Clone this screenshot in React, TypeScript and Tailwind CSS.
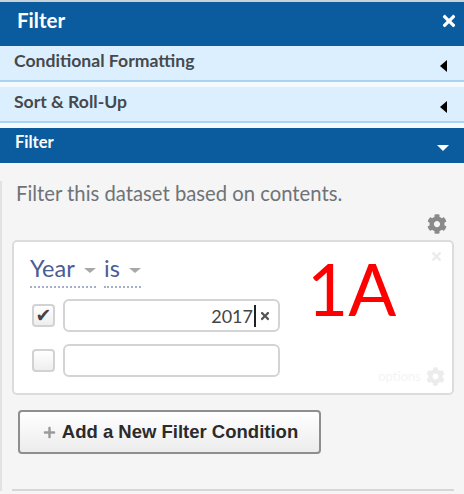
import { FaCog, FaPlus, FaTimes } from "react-icons/fa";

function SectionRow({ label }: { label: string }) {
  return (
    <div className="flex h-[36px] items-start justify-between border-b-2 border-[#a9d3f5] bg-[#dcefff] pl-[14px] pr-[17px]">
      <span className="mt-[4px] text-[17.6px] leading-[22px] font-bold text-[#45494d]">{label}</span>
      <span className="mt-[14px] h-0 w-0 border-y-[6px] border-r-[7px] border-y-transparent border-r-black" />
    </div>
  );
}

function Caret() {
  return <span className="mt-[3px] h-0 w-0 border-x-[6px] border-t-[5px] border-x-transparent border-t-[#a8a8a8]" />;
}

function Condition({ checked }: { checked?: boolean }) {
  return (
    <div className="flex items-center gap-[8px]">
      <span className="flex h-[23px] w-[23px] items-center justify-center rounded-[4px] border-2 border-[#d2d2d2] bg-gradient-to-b from-white to-[#eeeeee] font-['DejaVu_Sans',sans-serif] text-[19px] leading-none text-[#444]">
        {checked && "✔"}
      </span>
      <div className="flex h-[33px] w-[217px] items-center justify-end rounded-[6px] border-2 border-[#d4d4d4] bg-white pr-[7px] text-[18px] text-[#444]">
        {checked && (
          <>
            <span className="border-r-2 border-[#222] pr-[1px] leading-[22px]">2017</span>
            <FaTimes className="ml-[3px] text-[12px] text-[#555]" />
          </>
        )}
      </div>
    </div>
  );
}

export default function App() {
  return (
    <div className="h-[494px] w-[464px] overflow-hidden bg-[#f5f5f5] font-['Lato',sans-serif]">
      <div className="flex h-[46px] items-start justify-between border-t-2 border-[#c8d0d8] bg-[#0b5c9e] pl-[17px] pr-[6px]">
        <span className="mt-[5px] text-[20.5px] leading-[26px] font-bold text-white">Filter</span>
        <FaTimes className="mt-[10px] text-[18px] text-white" />
      </div>
      <SectionRow label="Conditional Formatting" />
      <div className="h-[5px] bg-[#f4f9fd]" />
      <SectionRow label="Sort & Roll-Up" />
      <div className="h-[5px] bg-[#f4f9fd]" />
      <div className="flex h-[35px] items-start justify-between bg-[#0b5c9e] pl-[15px] pr-[15px]">
        <span className="mt-[4px] text-[16.5px] leading-[20px] font-bold text-white">Filter</span>
        <span className="mt-[17px] h-0 w-0 border-x-[6px] border-t-[6px] border-x-transparent border-t-white" />
      </div>

      <div className="border-l-2 border-[#e2e2e2] pl-[10px] pr-[10px]">
        <p className="mt-[18px] pl-[4px] text-[20.25px] leading-[24px] text-[#6f7377]">
          Filter this dataset based on contents.
        </p>
        <div className="mt-[9px] flex h-[22px] justify-end pr-[7px]">
          <FaCog className="text-[20px] text-[#8a8a8a]" />
        </div>
        <div className="relative mt-[4px] h-[155px] rounded-[5px] border-2 border-[#dcdcdc] bg-white pt-[12px]">
          <FaTimes className="absolute right-[9px] top-[8px] text-[13px] text-[#ececec]" />
          <div className="flex gap-[8px] pl-[16px] text-[23.5px] leading-[28px] text-[#4a5c94]">
            <div className="flex h-[34px] w-[66px] items-start justify-between gap-[4px] border-b-2 border-dotted border-[#a6aec8]">
              <span>Year</span>
              <span className="mt-[11px] flex"><Caret /></span>
            </div>
            <div className="flex h-[34px] w-[37px] items-start justify-between border-b-2 border-dotted border-[#a6aec8]">
              <span>is</span>
              <span className="mt-[11px] flex"><Caret /></span>
            </div>
          </div>
          <div className="mt-[11px] flex flex-col gap-[12px] pl-[18px]">
            <Condition checked />
            <Condition />
          </div>
          <span className="absolute left-[293px] top-[4px] text-[71px] leading-[86px] text-[#ff0000]">
            1A
          </span>
          <div className="absolute bottom-[7px] right-[7px] flex items-center gap-[5px] text-[13px] text-[#f4f4f4]">
            <span>options</span>
            <FaCog className="text-[19px] text-[#ececec]" />
          </div>
        </div>
        <button className="mt-[15px] ml-[6px] flex h-[44px] w-[303px] items-center justify-center gap-[6px] rounded-[4px] border-2 border-[#8e8e8e] bg-gradient-to-b from-white to-[#ececec] pl-[2px] font-['Liberation_Sans',sans-serif] text-[18.5px] font-bold text-[#2b2b2b]">
          <FaPlus className="text-[13px] text-[#9a9a9a]" />
          Add a New Filter Condition
        </button>
        <div className="mt-[35px] border-t-2 border-[#d6d6d6]" />
      </div>
    </div>
  );
}
